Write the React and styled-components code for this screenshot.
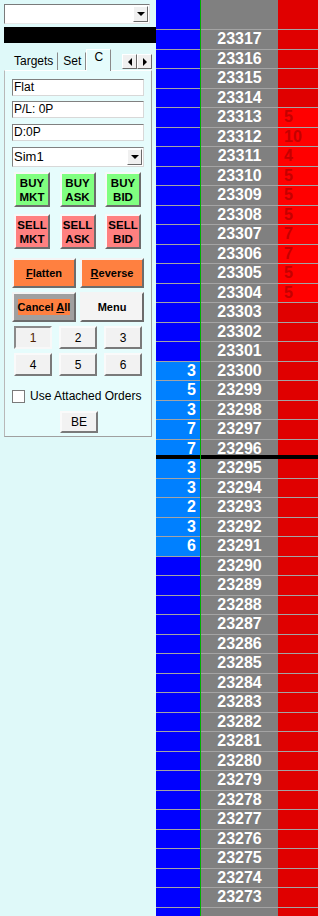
import styled, { createGlobalStyle } from 'styled-components'

const GlobalStyle = createGlobalStyle`
  html, body {
    margin: 0;
    padding: 0;
    background: #dff9f9;
    font-family: "Liberation Sans", Arial, sans-serif;
  }
`

const Page = styled.div`
  display: flex;
  width: 318px;
  height: 916px;
  overflow: hidden;
  background: #dff9f9;
`

const Side = styled.div`
  width: 156px;
  flex-shrink: 0;
  display: flex;
  flex-direction: column;
  padding: 4px 0 0 4px;
  box-sizing: border-box;
`

const Combo = styled.div`
  width: 146px;
  height: 20px;
  box-sizing: border-box;
  background: #fff;
  border: 1px solid #7a7a7a;
  border-right-color: #e8e8e8;
  border-bottom-color: #e8e8e8;
  display: flex;
  justify-content: flex-end;
  align-items: center;
  padding-right: 1px;
`

const ArrowButton = styled.div`
  width: 15px;
  height: ${(p) => p.$h || 16}px;
  flex-shrink: 0;
  box-sizing: border-box;
  background: #f0f0f0;
  border: 1px solid #fff;
  border-right-color: #6a6a6a;
  border-bottom-color: #6a6a6a;
  display: flex;
  align-items: center;
  justify-content: center;
`

const Down = styled.div`
  width: 0;
  height: 0;
  border-left: 4px solid transparent;
  border-right: 4px solid transparent;
  border-top: 4px solid #000;
`

const Side3 = styled.div`
  width: 0;
  height: 0;
  border-top: 4px solid transparent;
  border-bottom: 4px solid transparent;
  ${(p) => (p.$left ? 'border-right: 4px solid #000;' : 'border-left: 4px solid #000;')}
`

const BlackBar = styled.div`
  height: 16px;
  margin-top: 3px;
  background: #000;
`

const TabRow = styled.div`
  display: flex;
  align-items: flex-end;
  height: 23px;
  margin-top: 4px;
  padding-left: 5px;
  width: 148px;
  box-sizing: border-box;
`

const Tab = styled.div`
  height: ${(p) => (p.$active ? 22 : 18)}px;
  padding: 0 ${(p) => (p.$active ? 7 : 4)}px;
  box-sizing: border-box;
  font-size: 12px;
  line-height: ${(p) => (p.$active ? 15 : 17)}px;
  color: #000;
  background: ${(p) => (p.$active ? '#e6fcfc' : '#dff9f9')};
  border-left: 1px solid ${(p) => (p.$active ? '#fff' : '#dff9f9')};
  border-top: 1px solid ${(p) => (p.$active ? '#fff' : '#dff9f9')};
  border-right: 1px solid #8a8a8a;
  margin-bottom: ${(p) => (p.$active ? -1 : 0)}px;
  z-index: ${(p) => (p.$active ? 1 : 0)};
  white-space: nowrap;
`

const TabScroll = styled.div`
  display: flex;
  margin-left: auto;
  margin-bottom: 1px;
`

const Panel = styled.div`
  width: 148px;
  height: 367px;
  box-sizing: border-box;
  border: 1px solid #a0a0a0;
  border-top-color: #fff;
  border-left-color: #b8b8b8;
  background: #e6fcfc;
  padding: 8px 7px 0 7px;
  display: flex;
  flex-direction: column;
`

const Field = styled.div`
  height: 17px;
  box-sizing: border-box;
  background: #fff;
  border: 1px solid #808080;
  border-right-color: #d8d8d8;
  border-bottom-color: #d8d8d8;
  font-size: 12px;
  line-height: 15px;
  padding-left: 1px;
  margin-bottom: ${(p) => p.$mb || 6}px;
  color: #000;
`

const Select = styled(Field)`
  height: 20px;
  line-height: 18px;
  font-size: 13px;
  display: flex;
  justify-content: space-between;
  align-items: center;
  padding-right: 1px;
`

const Grid3 = styled.div`
  display: grid;
  grid-template-columns: repeat(3, ${(p) => p.$w}px);
  justify-content: space-between;
  padding: 0 ${(p) => p.$pad || 2}px 0 2px;
  margin-bottom: ${(p) => p.$mb || 0}px;
  row-gap: ${(p) => p.$gap || 0}px;
`

const OrderButton = styled.div`
  height: 35px;
  box-sizing: border-box;
  background: ${(p) => p.$bg};
  border: 2px solid;
  border-color: #f8f8f8 #6c6c6c #6c6c6c #f8f8f8;
  font-weight: bold;
  font-size: 11.5px;
  line-height: 14px;
  text-align: center;
  display: flex;
  align-items: center;
  justify-content: center;
  color: #000;
`

const Grid2 = styled.div`
  display: grid;
  grid-template-columns: 64px 64px;
  justify-content: space-between;
  margin-bottom: 4px;
`

const WideButton = styled.div`
  height: 30px;
  box-sizing: border-box;
  background: ${(p) => p.$bg};
  border: 2px solid;
  border-color: #f4f4f4 #6c6c6c #6c6c6c #f4f4f4;
  font-weight: bold;
  font-size: 11px;
  display: flex;
  align-items: center;
  justify-content: center;
  color: #000;
  white-space: nowrap;
`

const Highlight = styled.span`
  background: #ff8040;
  padding: 1px 0;
  line-height: 14px;
`

const Key = styled.div`
  height: 23px;
  box-sizing: border-box;
  background: #f2f2f2;
  border: 2px solid;
  border-color: ${(p) => (p.$pressed ? '#8a8a8a #f8f8f8 #f8f8f8 #8a8a8a' : '#fafafa #7a7a7a #7a7a7a #fafafa')};
  font-size: 12px;
  display: flex;
  align-items: center;
  justify-content: center;
  color: ${(p) => (p.$pressed ? '#502000' : '#000')};
`

const CheckRow = styled.label`
  display: flex;
  align-items: center;
  gap: 5px;
  margin-top: 13px;
  font-size: 12px;
  color: #000;
  white-space: nowrap;
`

const Box = styled.span`
  width: 13px;
  height: 13px;
  flex-shrink: 0;
  box-sizing: border-box;
  background: #fff;
  border: 1px solid #7a7a7a;
`

const BeButton = styled(Key)`
  width: 38px;
  height: 22px;
  align-self: center;
  margin-top: 8px;
  margin-left: 2px;
`

const Ladder = styled.div`
  display: flex;
  flex: 1;
`

const Column = styled.div`
  display: flex;
  flex-direction: column;
  width: ${(p) => p.$w}px;
  flex-shrink: 0;
  ${(p) => (p.$green ? 'border-left: 1px solid #00b000;' : '')}
  background: ${(p) => p.$bg};
`

const Cell = styled.div`
  height: ${(p) => (p.$head ? 30 : 19.5)}px;
  flex-shrink: 0;
  box-sizing: border-box;
  border-bottom: ${(p) => (p.$black ? '4px solid #000' : '1px solid #a4a4a4')};
  background: ${(p) => p.$bg};
  font-weight: bold;
  font-size: 16px;
  line-height: 18px;
  color: ${(p) => p.$color || '#fff'};
  text-align: ${(p) => p.$align || 'center'};
  padding: 0 ${(p) => p.$pr || 0}px 0 ${(p) => p.$pl || 0}px;
  white-space: nowrap;
  overflow: hidden;
`

const prices = Array.from({ length: 46 }, (_, i) => 23317 - i)
const bids = { 23300: 3, 23299: 5, 23298: 3, 23297: 7, 23296: 7, 23295: 3, 23294: 3, 23293: 2, 23292: 3, 23291: 6 }
const asks = { 23313: 5, 23312: 10, 23311: 4, 23310: 5, 23309: 5, 23308: 5, 23307: 7, 23306: 7, 23305: 5, 23304: 5 }
const splitAt = 23296

const App = () => {
  return (
    <Page>
      <GlobalStyle />
      <Side>
        <Combo>
          <ArrowButton>
            <Down />
          </ArrowButton>
        </Combo>
        <BlackBar />
        <TabRow>
          <Tab>Targets</Tab>
          <Tab>Set</Tab>
          <Tab $active>C</Tab>
          <TabScroll>
            <ArrowButton $h={15}><Side3 $left /></ArrowButton>
            <ArrowButton $h={15}><Side3 /></ArrowButton>
          </TabScroll>
        </TabRow>
        <Panel>
          <Field $mb={5}>Flat</Field>
          <Field>P/L: 0P</Field>
          <Field>D:0P</Field>
          <Select $mb={5}>
            Sim1
            <ArrowButton><Down /></ArrowButton>
          </Select>
          <Grid3 $w={36} $pad={3} $mb={7}>
            <OrderButton $bg="#80ff80">BUY<br />MKT</OrderButton>
            <OrderButton $bg="#80ff80">BUY<br />ASK</OrderButton>
            <OrderButton $bg="#80ff80">BUY<br />BID</OrderButton>
          </Grid3>
          <Grid3 $w={36} $pad={3} $mb={9}>
            <OrderButton $bg="#ff8080">SELL<br />MKT</OrderButton>
            <OrderButton $bg="#ff8080">SELL<br />ASK</OrderButton>
            <OrderButton $bg="#ff8080">SELL<br />BID</OrderButton>
          </Grid3>
          <Grid2>
            <WideButton $bg="#ff8040"><span><u>F</u>latten</span></WideButton>
            <WideButton $bg="#ff8040"><span><u>R</u>everse</span></WideButton>
          </Grid2>
          <Grid2>
            <WideButton $bg="#a0a0a0"><Highlight>Cancel <u>A</u>ll</Highlight></WideButton>
            <WideButton $bg="#f4f4f4">Menu</WideButton>
          </Grid2>
          <Grid3 $w={38} $pad={2} $gap={4}>
            <Key $pressed>1</Key>
            <Key>2</Key>
            <Key>3</Key>
            <Key>4</Key>
            <Key>5</Key>
            <Key>6</Key>
          </Grid3>
          <CheckRow>
            <Box />
            Use Attached Orders
          </CheckRow>
          <BeButton>BE</BeButton>
        </Panel>
      </Side>
      <Ladder>
        <Column $w={44} $bg="#0000ff">
          <Cell $head $bg="#0000ff" />
          {prices.map((p) => (
            <Cell
              key={p}
              $bg={bids[p] ? '#0080ff' : '#0000ff'}
              $black={p === splitAt}
              $align="right"
              $pr={4}
            >
              {bids[p] || ''}
            </Cell>
          ))}
        </Column>
        <Column $w={77} $green $bg="#808080">
          <Cell $head $bg="#808080" />
          {prices.map((p, i) => (
            <Cell key={p} $bg="#808080" $black={p === splitAt}>
              {i < 45 ? p : ''}
            </Cell>
          ))}
        </Column>
        <Column $w={41} $bg="#e00000">
          <Cell $head $bg="#e00000" />
          {prices.map((p) => (
            <Cell
              key={p}
              $bg={asks[p] ? '#ff0000' : '#e00000'}
              $black={p === splitAt}
              $align="left"
              $pl={6}
              $color="#c40000"
            >
              {asks[p] || ''}
            </Cell>
          ))}
        </Column>
      </Ladder>
    </Page>
  )
}

export default App
